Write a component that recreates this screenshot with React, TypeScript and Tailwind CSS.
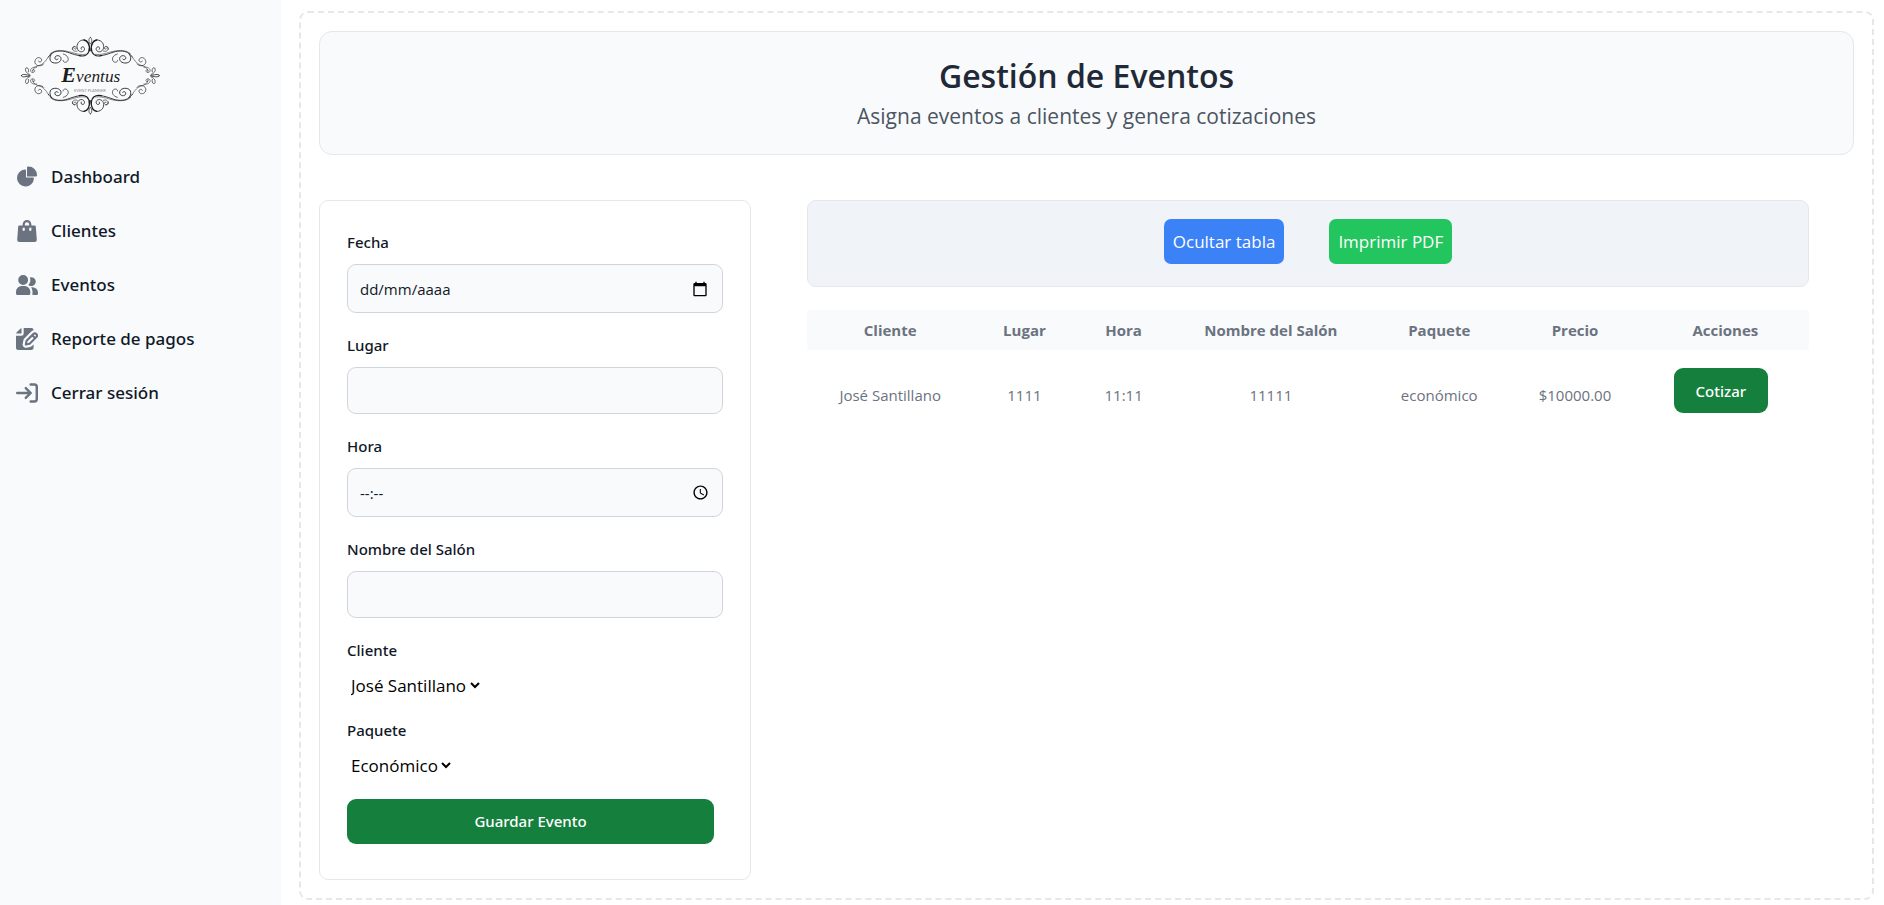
import React from "react";

const INK = "#1c1c1c";

function LogoCorner() {
  return (
    <g fill="none" stroke={INK} strokeLinecap="round">
      <path strokeWidth="2" d="M271 72c-6-5-6-18 0-20" />
      <path strokeWidth="4" d="M269 92c0-20-5-30-17-32" />
      <path strokeWidth="2.4" d="M254 60c-13-2-23 8-23 20 0 10 8 17 16 15 7-2 9-11 3-14-5-2-9 3-6 7" />
      <path strokeWidth="1.8" d="M232 93c-8 3-15-1-14-8 1-6 10-7 11-1 0 4-5 5-6 2M217 88c-1-5 2-9 7-9" />
      <path strokeWidth="3.4" d="M268 84c0 18-12 27-30 23" />
      <path strokeWidth="2.6" d="M240 107c-26-3-36-14-60-14-17 0-27 7-35 18" />
      <path strokeWidth="1.5" d="M256 103c-24 4-44-10-68-11-20-1-30 2-38 10" />
      <path strokeWidth="1.6" d="M145 111c-8 12-14 22-32 27-10 3-15 9-15 18" />
      <path strokeWidth="2.6" d="M155 101c-8 10-7 24 4 27 13 4 25-3 24-13-1-9-15-11-18-3-2 6 6 10 9 5" />
      <path strokeWidth="2" d="M190 102c14 4 17 14 13 21-4 6-14 5-14-2" />
      <path strokeWidth="2" d="M131 132c-2 3-8 6-15 5-11-1-14-12-9-19 5-8 17-6 18 2 0 7-9 8-10 3" />
      <path strokeWidth="1.6" d="M110 142c-11-3-21 5-18 12 3 6 13 4 12-2-1-4-6-4-7-1" />
      <path strokeWidth="2" d="M88 163c-10-3-14-13-10-19 5-3 10 4 7 12" />
      <path strokeWidth="2.4" d="M90 166c-9 0-24-7-26 1" />
    </g>
  );
}

function Logo() {
  return (
    <svg viewBox="0 0 600 330" className="h-[110px] w-[200px]" role="img" aria-label="Eventus Event Planner">
      <LogoCorner />
      <g transform="translate(542 0) scale(-1 1)"><LogoCorner /></g>
      <g transform="translate(0 334) scale(1 -1)"><LogoCorner /></g>
      <g transform="translate(542 334) scale(-1 -1)"><LogoCorner /></g>
      <text x="184" y="187" fill={INK} fontStyle="italic" fontWeight="700" fontFamily="Liberation Serif, serif" fontSize="66">
        E<tspan fontSize="52" fontWeight="400">ventus</tspan>
      </text>
      <text x="222" y="215" fill="#8a8a8a" fontFamily="Lato, sans-serif" fontSize="12">EVENT PLANNER</text>
    </svg>
  );
}

const navItems = [
  {
    label: "Dashboard",
    icon: (
      <svg className="size-[22px]" viewBox="0 0 22 21" fill="currentColor" aria-hidden="true">
        <path d="M16.975 11H10V4.025a1 1 0 0 0-1.066-.998 8.5 8.5 0 1 0 9.039 9.039.999.999 0 0 0-1-1.066h.002Z" />
        <path d="M12.5 0c-.157 0-.311.01-.565.027A1 1 0 0 0 11 1.02V10h8.975a1 1 0 0 0 1-.935c.013-.188.028-.374.028-.565A8.51 8.51 0 0 0 12.5 0Z" />
      </svg>
    ),
  },
  {
    label: "Clientes",
    icon: (
      <svg className="size-[22px]" viewBox="0 0 18 20" fill="currentColor" aria-hidden="true">
        <path d="M17 5.923A1 1 0 0 0 16 5h-3V4a4 4 0 1 0-8 0v1H2a1 1 0 0 0-1 .923L.086 17.846A2 2 0 0 0 2.08 20h13.84a2 2 0 0 0 1.994-2.153L17 5.923ZM7 9a1 1 0 0 1-2 0V7h2v2Zm0-5a2 2 0 1 1 4 0v1H7V4Zm6 5a1 1 0 1 1-2 0V7h2v2Z" />
      </svg>
    ),
  },
  {
    label: "Eventos",
    icon: (
      <svg className="size-[22px]" viewBox="0 0 20 18" fill="currentColor" aria-hidden="true">
        <path d="M14 2a3.963 3.963 0 0 0-1.4.267 6.439 6.439 0 0 1-1.331 6.638A4 4 0 1 0 14 2Zm1 9h-1.264A6.957 6.957 0 0 1 15 15v2a2.97 2.97 0 0 1-.184 1H19a1 1 0 0 0 1-1v-1a5.006 5.006 0 0 0-5-5ZM6.5 9a4.5 4.5 0 1 0 0-9 4.5 4.5 0 0 0 0 9ZM8 10H5a5.006 5.006 0 0 0-5 5v2a1 1 0 0 0 1 1h11a1 1 0 0 0 1-1v-2a5.006 5.006 0 0 0-5-5Z" />
      </svg>
    ),
  },
  {
    label: "Reporte de pagos",
    icon: (
      <svg className="size-[22px]" viewBox="0 0 20 20" fill="currentColor" aria-hidden="true">
        <path d="M5 5V.13a2.96 2.96 0 0 0-1.293.749L.879 3.707A2.96 2.96 0 0 0 .13 5H5Z" />
        <path d="M6.737 11.061a2.961 2.961 0 0 1 .81-1.515l6.117-6.116A4.839 4.839 0 0 1 16 2.141V2a1.97 1.97 0 0 0-1.933-2H7v5a2 2 0 0 1-2 2H0v11a1.969 1.969 0 0 0 1.933 2h12.134A1.97 1.97 0 0 0 16 18v-3.093l-1.546 1.546c-.413.413-.94.695-1.513.81l-3.4.679a2.947 2.947 0 0 1-1.85-.227 2.96 2.96 0 0 1-1.635-3.257l.681-3.397Z" />
        <path d="M8.961 16a.93.93 0 0 0 .189-.019l3.4-.679a.961.961 0 0 0 .49-.263l6.118-6.117a2.884 2.884 0 0 0-4.079-4.078l-6.117 6.117a.96.96 0 0 0-.263.491l-.679 3.4A.961.961 0 0 0 8.961 16Zm7.477-9.8a.958.958 0 0 1 .68-.281.961.961 0 0 1 .682 1.644l-.315.315-1.36-1.36.313-.318Zm-5.911 5.911 4.236-4.236 1.359 1.359-4.236 4.237-1.7.339.341-1.699Z" />
      </svg>
    ),
  },
  {
    label: "Cerrar sesión",
    icon: (
      <svg className="size-[22px]" viewBox="0 0 18 16" fill="none" stroke="currentColor" strokeWidth="2" strokeLinecap="round" strokeLinejoin="round" aria-hidden="true">
        <path d="M1 8h11m0 0L8 4m4 4-4 4m4-11h3a2 2 0 0 1 2 2v10a2 2 0 0 1-2 2h-3" />
      </svg>
    ),
  },
];

const medium = "font-['Noto_Sans',sans-serif] font-medium";
const labelClass = `${medium} mb-[11px] block text-[15px] leading-[22px] text-gray-900`;
const inputClass =
  "w-full rounded-[9px] border border-[#d1d5db] bg-[#f9fafb] px-3 text-[15px] text-[#111827] placeholder:text-[#111827]";

function CalendarIcon() {
  return (
    <svg className="size-4" viewBox="0 0 24 24" fill="currentColor" aria-hidden="true">
      <path d="M20 3h-1V1h-2v2H7V1H5v2H4c-1.100 0-2 .9-2 2v16c0 1.100.9 2 2 2h16c1.100 0 2-.9 2-2V5c0-1.100-.9-2-2-2zm0 18H4V8h16v13z" />
    </svg>
  );
}

function ClockIcon() {
  return (
    <svg className="size-[17px]" viewBox="0 0 24 24" fill="currentColor" aria-hidden="true">
      <path d="M11.990 2C6.470 2 2 6.480 2 12s4.470 10 9.990 10C17.520 22 22 17.520 22 12S17.520 2 11.990 2zM12 20c-4.420 0-8-3.580-8-8s3.580-8 8-8 8 3.580 8 8-3.580 8-8 8zm.500-13H11v6l5.250 3.150.750-1.230-4.500-2.670z" />
    </svg>
  );
}

interface FieldProps {
  id: string;
  label: string;
  placeholder?: string;
  icon?: React.ReactNode;
  iconLabel?: string;
}

function Field({ id, label, placeholder, icon, iconLabel }: FieldProps) {
  return (
    <div className="mb-[21px]">
      <label htmlFor={id} className={labelClass}>{label}</label>
      <div className="relative">
        <input
          id={id}
          type="text"
          placeholder={placeholder}
          className={`${inputClass} ${icon ? "h-[49px]" : "h-[47px]"}`}
        />
        {icon && (
          <button type="button" aria-label={iconLabel} className="absolute inset-y-0 right-3 flex w-[22px] items-center justify-center text-black">
            {icon}
          </button>
        )}
      </div>
    </div>
  );
}

function SelectField({ id, label, options }: { id: string; label: string; options: string[] }) {
  return (
    <div className="mb-[21px]">
      <label htmlFor={id} className={labelClass}>{label}</label>
      <select id={id} className="block h-[26px] bg-transparent text-[17px] text-black">
        {options.map((o) => (
          <option key={o}>{o}</option>
        ))}
      </select>
    </div>
  );
}

const columns = [
  { title: "Cliente", width: "w-[16.6%]" },
  { title: "Lugar", width: "w-[10.2%]" },
  { title: "Hora", width: "w-[9.6%]" },
  { title: "Nombre del Salón", width: "w-[19.8%]" },
  { title: "Paquete", width: "w-[13.8%]" },
  { title: "Precio", width: "w-[13.3%]" },
  { title: "Acciones", width: "w-[16.7%]" },
];

const rows = [["José Santillano", "1111", "11:11", "11111", "económico", "$10000.00"]];

export default function App() {
  return (
    <div className="flex min-h-screen bg-white font-['Open_Sans','Noto_Sans',sans-serif]">
      <aside className="w-[281px] shrink-0 bg-[#f9fafb] pt-5">
        <Logo />
        <nav className="mt-6 px-[7px]">
          <ul className="flex flex-col gap-[9px]">
            {navItems.map((item) => (
              <li key={item.label}>
                <a href="#" className="flex h-[45px] items-center gap-[13px] px-[9px]">
                  <span className="text-[#6b7280]">{item.icon}</span>
                  <span className={`${medium} text-[17px] text-gray-900`}>{item.label}</span>
                </a>
              </li>
            ))}
          </ul>
        </nav>
      </aside>

      <main className="min-w-0 flex-1 pt-[11px] pr-[10px] pb-[5px] pl-[18px]">
        <div className="rounded-[9px] border-2 border-dashed border-[#e5e7eb] p-[18px]">
          <header className="rounded-[13px] border border-[#e5e7eb] bg-[#f9fafb] pt-6 pb-[18px] text-center">
            <h1 className="text-[32px] leading-10 font-semibold text-[#1f2937]">Gestión de Eventos</h1>
            <p className="text-[21px] leading-10 text-[#4b5563]">Asigna eventos a clientes y genera cotizaciones</p>
          </header>

          <div className="mt-[45px] grid grid-cols-[minmax(0,432fr)_minmax(0,1002fr)] gap-14 pr-[45px]">
            <form className="rounded-[9px] border border-[#e5e7eb] px-[27px] pt-[30px] pb-[35px]" onSubmit={(e) => e.preventDefault()}>
              <Field id="fecha" label="Fecha" placeholder="dd/mm/aaaa" icon={<CalendarIcon />} iconLabel="Elegir fecha" />
              <Field id="lugar" label="Lugar" />
              <Field id="hora" label="Hora" placeholder="--:--" icon={<ClockIcon />} iconLabel="Elegir hora" />
              <Field id="salon" label="Nombre del Salón" />
              <SelectField id="cliente" label="Cliente" options={["José Santillano"]} />
              <SelectField id="paquete" label="Paquete" options={["Económico"]} />
              <div className="pr-[9px]">
                <button type="submit" className={`${medium} h-[45px] w-full rounded-[9px] bg-[#15803d] text-[15px] text-white`}>
                  Guardar Evento
                </button>
              </div>
            </form>

            <section>
              <div className="flex justify-center gap-[45px] rounded-[9px] border border-[#e5e7eb] bg-[#f0f4f9] pt-[18px] pb-[22px]">
                <button type="button" className="h-[45px] rounded-[7px] bg-[#3b82f6] px-[9px] text-[17px] text-white">Ocultar tabla</button>
                <button type="button" className="h-[45px] rounded-[7px] bg-[#22c55e] px-[9px] text-[17px] text-white">Imprimir PDF</button>
              </div>

              <table className="mt-[23px] w-full table-fixed text-center text-[15px] leading-[22px] text-[#6b7280]">
                <thead className="bg-[#f9fafb]">
                  <tr>
                    {columns.map((c) => (
                      <th key={c.title} scope="col" className={`${c.width} py-[9px] font-bold`}>{c.title}</th>
                    ))}
                  </tr>
                </thead>
                <tbody>
                  {rows.map((r) => (
                    <tr key={r[0]}>
                      {r.map((cell, i) => (
                        <td key={i} className="py-[18px]">{cell}</td>
                      ))}
                      <td className="py-[18px]">
                        <button type="button" className={`${medium} mr-[9px] mb-[9px] h-[45px] rounded-[9px] bg-[#15803d] px-[22px] text-[15px] text-white`}>
                          Cotizar
                        </button>
                      </td>
                    </tr>
                  ))}
                </tbody>
              </table>
            </section>
          </div>
        </div>
      </main>
    </div>
  );
}
